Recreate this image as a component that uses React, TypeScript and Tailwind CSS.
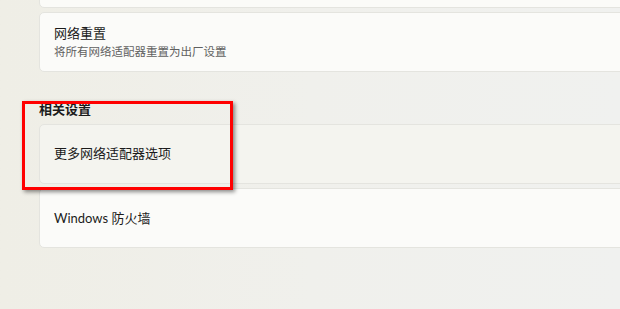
import React from "react";

const font = {
  fontFamily: 'Lato, "Noto Sans CJK SC", "Noto Sans", sans-serif',
};

function Card({ children, className = "" }: { children: React.ReactNode; className?: string }) {
  return (
    <div
      className={`w-[600px] rounded-[5px] border border-[#e4e4df] flex flex-col justify-center pl-[14px] ${className}`}
    >
      {children}
    </div>
  );
}

export default function App() {
  return (
    <div
      className="relative w-[620px] h-[309px] overflow-hidden bg-gradient-to-r from-[#efeee6] via-[#f0f0ec] to-[#f0f1ef] pl-[39px]"
      style={font}
    >
      {/* previous card, cut off at the top */}
      <Card className="h-[60px] -mt-[52px] bg-[#fbfbf8]">
        <span />
      </Card>

      {/* network reset */}
      <Card className="h-[60px] mt-[4px] bg-[#fbfbf9] gap-[2px] pb-[1px]">
        <span className="text-[13px] leading-[17px] text-[#1b1b1b]">网络重置</span>
        <span className="text-[11.5px] leading-[15px] text-[#606060]">将所有网络适配器重置为出厂设置</span>
      </Card>

      {/* related settings */}
      <div className="mt-[28px] text-[13px] leading-[18px] font-semibold text-[#1b1b1b]">
        相关设置
      </div>

      <Card className="h-[60px] mt-[6px] bg-[#f4f4ef] pb-[2px]">
        <span className="text-[13px] leading-[17px] text-[#1b1b1b]">更多网络适配器选项</span>
      </Card>

      <Card className="h-[60px] mt-[4px] bg-[#fbfbf9]">
        <span className="text-[13px] leading-[17px] text-[#1b1b1b]">Windows 防火墙</span>
      </Card>

      {/* red annotation box */}
      <div className="absolute left-[22px] top-[101px] w-[211px] h-[89px] border-[3px] border-[#ff0000] shadow-[2px_2px_4px_rgba(0,0,0,0.45)]" />
    </div>
  );
}
